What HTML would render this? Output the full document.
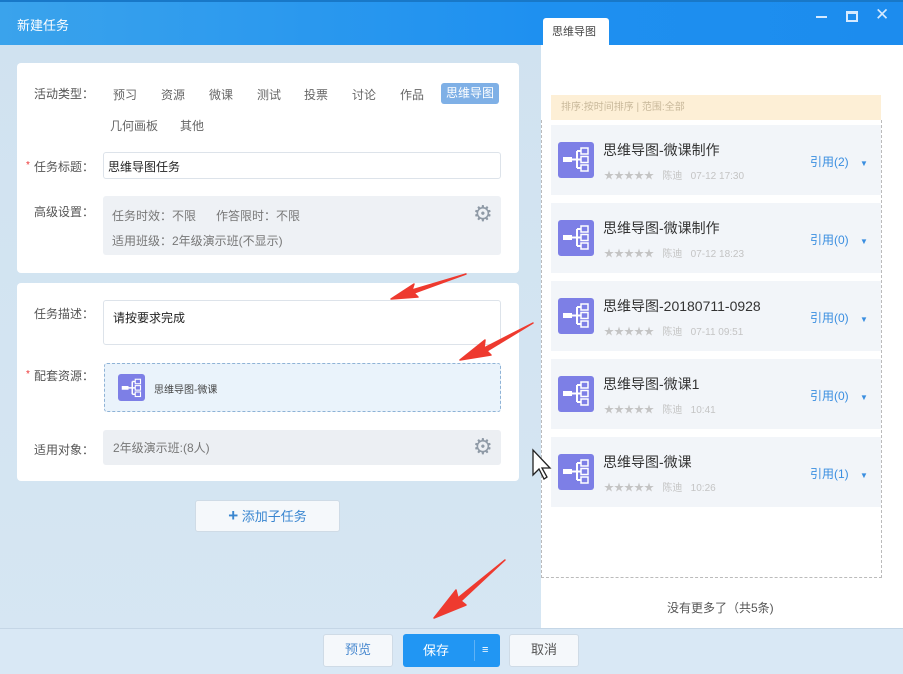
<!DOCTYPE html>
<html><head><meta charset="utf-8">
<style>
*{margin:0;padding:0;box-sizing:border-box}
body{width:903px;height:674px;overflow:hidden;position:relative;background:linear-gradient(180deg,#d0e2f0,#d6e6f3);font-family:"Liberation Sans","Noto Sans CJK SC",sans-serif;font-size:12px;color:#333}
.abs{position:absolute}
.title{left:0;top:0;width:903px;height:45px;background:linear-gradient(90deg,#3aa3ec,#1e90f0 60%,#1c8cee);border-top:2px solid #1878c8}
.card{background:#fff;border-radius:4px}
.lbl{color:#555;font-size:12px}
.star{color:#e33}
.tag{color:#666}
.item{left:551px;width:330px;height:70px;background:#f2f5f9}
.ic{width:36px;height:36px;background:#7d7fe6;border-radius:3px}
.btn{background:#f5f8fb;border:1px solid #cfdbe6;border-radius:3px;text-align:center;line-height:30px;font-size:13px}
.gear{color:#8f9aa6;font-size:22px;line-height:22px}
</style></head><body>
<div class="abs title"></div>
<div class="abs" style="left:17px;top:15px;color:#fff;font-size:13px">新建任务</div>
<div class="abs" style="left:543px;top:18px;width:66px;height:28px;background:#fff;border-radius:3px 3px 0 0;font-size:11px;line-height:28px;padding-left:9px;color:#444">思维导图</div>
<div class="abs" style="left:816px;top:16px;width:11px;height:2px;background:#d5eaff"></div>
<div class="abs" style="left:846px;top:11px;width:12px;height:11px;border:2px solid #d5eaff;border-top-width:3px"></div>
<div class="abs" style="left:875px;top:5px;color:#d5eaff;font-size:17px">✕</div>

<!-- card 1 -->
<div class="abs card" style="left:17px;top:63px;width:502px;height:210px"></div>
<div class="abs lbl" style="left:34px;top:85px">活动类型：</div>
<div class="abs tag" style="left:113px;top:86px">预习</div>
<div class="abs tag" style="left:161px;top:86px">资源</div>
<div class="abs tag" style="left:209px;top:86px">微课</div>
<div class="abs tag" style="left:257px;top:86px">测试</div>
<div class="abs tag" style="left:304px;top:86px">投票</div>
<div class="abs tag" style="left:352px;top:86px">讨论</div>
<div class="abs tag" style="left:400px;top:86px">作品</div>
<div class="abs" style="left:441px;top:83px;width:58px;height:21px;background:#7fb0e6;border-radius:3px;color:#fff;text-align:center;line-height:21px">思维导图</div>
<div class="abs tag" style="left:110px;top:117px">几何画板</div>
<div class="abs tag" style="left:180px;top:117px">其他</div>
<div class="abs star" style="left:26px;top:160px;font-size:10px">*</div>
<div class="abs lbl" style="left:34px;top:158px">任务标题：</div>
<div class="abs" style="left:103px;top:152px;width:398px;height:27px;border:1px solid #dde3ea;border-radius:3px;padding:5px 4px;color:#222">思维导图任务</div>
<div class="abs lbl" style="left:34px;top:203px">高级设置：</div>
<div class="abs" style="left:103px;top:196px;width:398px;height:59px;background:#eef1f5;border-radius:3px"></div>
<div class="abs" style="left:112px;top:207px;color:#777">任务时效：不限&nbsp;&nbsp;&nbsp;&nbsp;&nbsp;&nbsp;作答限时：不限</div>
<div class="abs" style="left:112px;top:232px;color:#777">适用班级：2年级演示班(不显示)</div>
<div class="abs gear" style="left:473px;top:203px">⚙</div>

<!-- card 2 -->
<div class="abs card" style="left:17px;top:283px;width:502px;height:198px"></div>
<div class="abs lbl" style="left:34px;top:305px">任务描述：</div>
<div class="abs" style="left:103px;top:300px;width:398px;height:45px;border:1px solid #dde3ea;border-radius:3px;padding:8px 9px;color:#222">请按要求完成</div>
<div class="abs star" style="left:26px;top:369px;font-size:10px">*</div>
<div class="abs lbl" style="left:34px;top:367px">配套资源：</div>
<div class="abs" style="left:104px;top:363px;width:397px;height:49px;border:1px dashed #8fb3d6;border-radius:3px;background:#eaf3fb"></div>
<div class="abs ic" style="left:118px;top:374px;width:27px;height:27px"></div>
<div class="abs" style="left:154px;top:381px;font-size:10px;color:#444">思维导图-微课</div>
<div class="abs lbl" style="left:34px;top:441px">适用对象：</div>
<div class="abs" style="left:103px;top:430px;width:398px;height:35px;background:#eceff3;border-radius:3px;padding:9px 10px;color:#777">2年级演示班:(8人)</div>
<div class="abs gear" style="left:473px;top:436px">⚙</div>

<div class="abs btn" style="left:195px;top:500px;width:145px;height:32px;color:#3a86d0"><b style="font-size:17px">+</b> 添加子任务</div>

<!-- right panel -->
<div class="abs" style="left:541px;top:45px;width:362px;height:583px;background:#fff"></div>
<div class="abs" style="left:551px;top:95px;width:330px;height:25px;background:#fdefd6;color:#c8b89a;font-size:10px;line-height:25px;padding-left:10px">排序:按时间排序 | 范围:全部</div>
<div class="abs" style="left:541px;top:120px;width:341px;height:458px;border:1px dashed #bbb;border-top:none"></div>

<div class="abs item" style="top:125px"></div>
<div class="abs item" style="top:203px"></div>
<div class="abs item" style="top:281px"></div>
<div class="abs item" style="top:359px"></div>
<div class="abs item" style="top:437px"></div>

<div class="abs ic" style="left:558px;top:142px"></div>
<div class="abs ic" style="left:558px;top:220px"></div>
<div class="abs ic" style="left:558px;top:298px"></div>
<div class="abs ic" style="left:558px;top:376px"></div>
<div class="abs ic" style="left:558px;top:454px"></div>

<div class="abs" style="left:603px;top:140px;font-size:14px;color:#333">思维导图-微课制作</div>
<div class="abs" style="left:603px;top:218px;font-size:14px;color:#333">思维导图-微课制作</div>
<div class="abs" style="left:603px;top:296px;font-size:14px;color:#333">思维导图-20180711-0928</div>
<div class="abs" style="left:603px;top:374px;font-size:14px;color:#333">思维导图-微课1</div>
<div class="abs" style="left:603px;top:452px;font-size:14px;color:#333">思维导图-微课</div>

<div class="abs" style="left:604px;top:167px;font-size:10px;color:#c4c4c4">★★★★★&nbsp;&nbsp;&nbsp;陈迪&nbsp;&nbsp;&nbsp;07-12 17:30</div>
<div class="abs" style="left:604px;top:245px;font-size:10px;color:#c4c4c4">★★★★★&nbsp;&nbsp;&nbsp;陈迪&nbsp;&nbsp;&nbsp;07-12 18:23</div>
<div class="abs" style="left:604px;top:323px;font-size:10px;color:#c4c4c4">★★★★★&nbsp;&nbsp;&nbsp;陈迪&nbsp;&nbsp;&nbsp;07-11 09:51</div>
<div class="abs" style="left:604px;top:401px;font-size:10px;color:#c4c4c4">★★★★★&nbsp;&nbsp;&nbsp;陈迪&nbsp;&nbsp;&nbsp;10:41</div>
<div class="abs" style="left:604px;top:479px;font-size:10px;color:#c4c4c4">★★★★★&nbsp;&nbsp;&nbsp;陈迪&nbsp;&nbsp;&nbsp;10:26</div>

<div class="abs" style="left:810px;top:153px;color:#3a8ee0">引用(2) <span style="font-size:8px;margin-left:8px">▼</span></div>
<div class="abs" style="left:810px;top:231px;color:#3a8ee0">引用(0) <span style="font-size:8px;margin-left:8px">▼</span></div>
<div class="abs" style="left:810px;top:309px;color:#3a8ee0">引用(0) <span style="font-size:8px;margin-left:8px">▼</span></div>
<div class="abs" style="left:810px;top:387px;color:#3a8ee0">引用(0) <span style="font-size:8px;margin-left:8px">▼</span></div>
<div class="abs" style="left:810px;top:465px;color:#3a8ee0">引用(1) <span style="font-size:8px;margin-left:8px">▼</span></div>

<div class="abs" style="left:667px;top:599px;color:#555">没有更多了（共5条)</div>

<!-- bottom -->
<div class="abs" style="left:0;top:628px;width:903px;height:46px;background:#d9e8f5;border-top:1px solid #c5d6e6"></div>
<div class="abs btn" style="left:323px;top:634px;width:70px;height:33px;color:#4a8ad0">预览</div>
<div class="abs" style="left:403px;top:634px;width:97px;height:33px;background:#2196f3;border-radius:3px;color:#fff;font-size:13px;line-height:33px;padding-left:20px">保存 <span style="position:absolute;left:71px;top:6px;height:21px;border-left:1px solid #5fb2f5;padding-left:7px;line-height:21px;font-size:11px">≡</span></div>
<div class="abs btn" style="left:509px;top:634px;width:70px;height:33px;color:#555">取消</div>

<svg class="abs" style="left:0;top:0" width="903" height="674">
<defs><g id="mm"><rect x="5" y="16" width="9" height="5" fill="#fff"/><path d="M14 18.5h5M19 10v17M19 10h4M19 18.5h4M19 27h4" stroke="#fff" stroke-width="2" fill="none"/><rect x="23" y="7" width="7" height="6" fill="none" stroke="#fff" stroke-width="1.5"/><rect x="23" y="15.5" width="7" height="6" fill="none" stroke="#fff" stroke-width="1.5"/><rect x="23" y="24" width="7" height="6" fill="none" stroke="#fff" stroke-width="1.5"/></g></defs>
<use href="#mm" x="558" y="141"/><use href="#mm" x="558" y="219"/><use href="#mm" x="558" y="297"/><use href="#mm" x="558" y="375"/><use href="#mm" x="558" y="453"/>
<use href="#mm" transform="translate(118,374) scale(0.75)"/>
<g fill="#ee3a2f">
<path d="M466 274 L412 290 L414 284 L391 299 L418 297 L414 293 Z" stroke="#ee3a2f" stroke-width="1.5" stroke-linejoin="round"/>
<path d="M533 323 L484 348 L485 340 L460 360 L491 355 L487 351 Z" stroke="#ee3a2f" stroke-width="1.5" stroke-linejoin="round"/>
<path d="M505 560 L458 598 L456 590 L434 618 L466 605 L461 601 Z" stroke="#ee3a2f" stroke-width="1.5" stroke-linejoin="round"/>
</g>
<path d="M533 450 L533 475 L539 469 L544 479 L547 477 L542 468 L550 468 Z" fill="#fff" stroke="#222" stroke-width="1.3"/>
</svg>
</body></html>
